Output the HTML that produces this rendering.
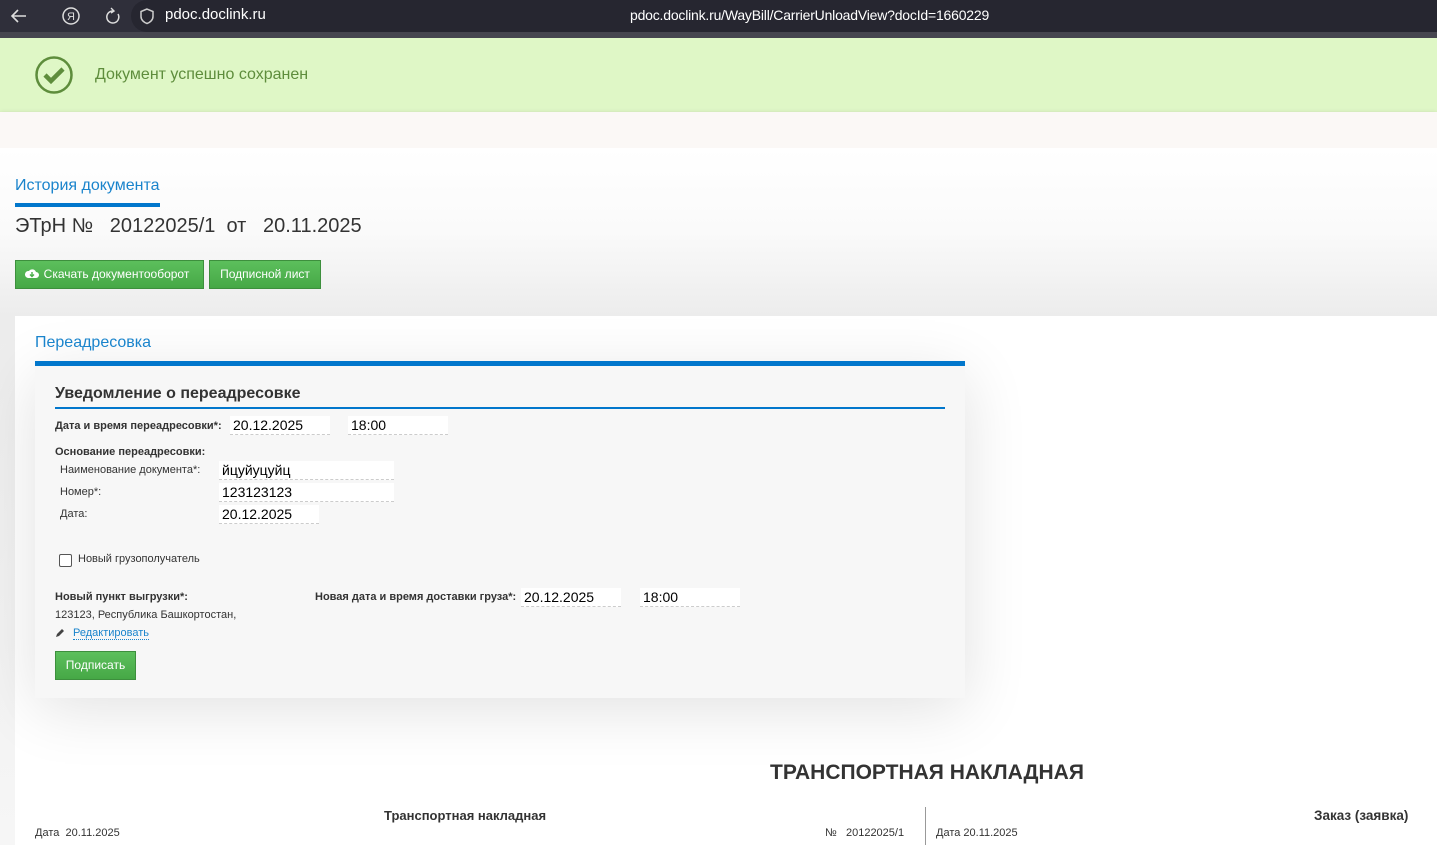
<!DOCTYPE html>
<html><head><meta charset="utf-8"><style>
*{margin:0;padding:0;box-sizing:border-box}
body{width:1437px;height:845px;overflow:hidden;font-family:"Liberation Sans",Arial,sans-serif;background:#fff;position:relative}
.abs{position:absolute}
.bar{left:0;top:0;width:1437px;height:32px;background:#2f2f3a}
.bar2{left:0;top:32px;width:1437px;height:6px;background:#46464f}
.url{left:131px;top:0;width:1306px;height:32px;background:#262630;border-radius:16px 0 0 16px}
.succ{left:0;top:38px;width:1437px;height:74px;background:#dff7c6}
.pink{left:0;top:112px;width:1437px;height:36px;background:#fbf8f6;box-shadow:0 2px 5px rgba(0,0,0,.25)}
.grad{left:0;top:148px;width:1437px;height:168px;background:linear-gradient(#fff 0%,#fafafa 50%,#ececec 100%)}
.strip{left:0;top:316px;width:15px;height:529px;background:linear-gradient(#ececec,#f6f6f6)}
.card{left:15px;top:316px;width:1422px;height:529px;background:#fff}
.inner{left:35px;top:366px;width:930px;height:332px;background:#f7f7f7;box-shadow:0 10px 60px rgba(0,0,0,.12)}
.btn{background:linear-gradient(#5cbf5c,#46a846);border:1px solid #3d8f3d;color:#fff;font-size:12px;text-align:center}
.in{background:#fff;border-bottom:1px dashed #ccc;font-size:14px;color:#000;padding-left:3px;height:19px;line-height:18px}
.lb{font-size:11px;color:#333}
.b{font-weight:bold}
</style></head><body>
<div class="abs bar"></div><div class="abs bar2"></div><div class="abs url"></div>
<svg class="abs" style="left:8px;top:6px" width="130" height="22" viewBox="0 0 130 22">
<path d="M18 10H5M10 4 4 10l6 6" stroke="#ddd" stroke-width="1.6" fill="none"/>
<circle cx="63" cy="10" r="8" stroke="#ddd" stroke-width="1.5" fill="none"/><text x="59" y="14" fill="#ddd" font-size="11" font-family="Liberation Sans">Я</text>
<path d="M105 5a6 6 0 1 0 5 3" stroke="#ddd" stroke-width="1.5" fill="none"/><path d="M103 2l3 3-3 2" stroke="#ddd" stroke-width="1.4" fill="none"/>
</svg>
<svg class="abs" style="left:139px;top:8px" width="16" height="17"><path d="M8 1 2 3.5v5c0 3.5 3 6 6 7 3-1 6-3.5 6-7v-5z" stroke="#ccc" stroke-width="1.5" fill="none"/></svg>
<div class="abs" style="left:165px;top:6px;color:#fff;font-size:15px">pdoc.doclink.ru</div>
<div class="abs" style="left:630px;top:7px;color:#fff;font-size:14px;letter-spacing:-0.2px">pdoc.doclink.ru/WayBill/CarrierUnloadView?docId=1660229</div>
<div class="abs succ"></div>
<svg class="abs" style="left:34px;top:55px" width="40" height="40"><circle cx="20" cy="20" r="17.5" stroke="#5e8d3c" stroke-width="2.5" fill="none"/><path d="M11 20l6 6 12-12" stroke="#5e8d3c" stroke-width="4.5" fill="none"/></svg>
<div class="abs" style="left:95px;top:66px;font-size:16px;color:#5e8d3c">Документ успешно сохранен</div>
<div class="abs pink"></div>
<div class="abs grad"></div>
<div class="abs" style="left:15px;top:177px;font-size:16px;color:#1a84cc">История документа</div>
<div class="abs" style="left:15px;top:203px;width:145px;height:4px;background:#0277cc"></div>
<div class="abs" style="left:15px;top:215px;font-size:20px;color:#333;white-space:pre">ЭТрН №   20122025/1  от   20.11.2025</div>
<div class="abs btn" style="left:15px;top:260px;width:189px;height:29px;line-height:27px;padding-left:14px">Скачать документооборот</div>
<svg class="abs" style="left:25px;top:267px" width="14" height="12"><path d="M3 11h8a3 3 0 0 0 0-6 4 4 0 0 0-7-1 3 3 0 0 0-1 7z" fill="#fff"/><path d="M7 5v4M5 7.5 7 9.5 9 7.5" stroke="#4bb04b" stroke-width="1.4" fill="none"/></svg>
<div class="abs btn" style="left:209px;top:260px;width:112px;height:29px;line-height:27px">Подписной лист</div>
<div class="abs strip"></div>
<div class="abs card"></div>
<div class="abs inner"></div>
<div class="abs" style="left:35px;top:334px;font-size:16px;color:#1a84cc">Переадресовка</div>
<div class="abs" style="left:35px;top:361px;width:930px;height:5px;background:#0277cc"></div>
<div class="abs b" style="left:55px;top:385px;font-size:16px;color:#333">Уведомление о переадресовке</div>
<div class="abs" style="left:55px;top:407px;width:890px;height:2px;background:#0277cc"></div>
<div class="abs lb b" style="left:55px;top:420px">Дата и время переадресовки*:</div>
<div class="abs in" style="left:230px;top:416px;width:100px">20.12.2025</div>
<div class="abs in" style="left:348px;top:416px;width:100px">18:00</div>
<div class="abs lb b" style="left:55px;top:446px">Основание переадресовки:</div>
<div class="abs lb" style="left:60px;top:464px">Наименование документа*:</div>
<div class="abs lb" style="left:60px;top:486px">Номер*:</div>
<div class="abs lb" style="left:60px;top:508px">Дата:</div>
<div class="abs in" style="left:219px;top:461px;width:175px">йцуйуцуйц</div>
<div class="abs in" style="left:219px;top:483px;width:175px">123123123</div>
<div class="abs in" style="left:219px;top:505px;width:100px">20.12.2025</div>
<div class="abs" style="left:59px;top:554px;width:13px;height:13px;border:1px solid #555;border-radius:2px;background:#fff"></div>
<div class="abs lb" style="left:78px;top:553px">Новый грузополучатель</div>
<div class="abs lb b" style="left:55px;top:591px">Новый пункт выгрузки*:</div>
<div class="abs lb" style="left:55px;top:609px">123123, Республика Башкортостан,</div>
<svg class="abs" style="left:55px;top:628px" width="10" height="10"><path d="M1 9l1-3 5-5 2 2-5 5z" fill="#444"/></svg>
<div class="abs lb" style="left:73px;top:627px;color:#1a84cc;border-bottom:1px dotted #1a84cc;line-height:12px">Редактировать</div>
<div class="abs lb b" style="left:315px;top:591px">Новая дата и время доставки груза*:</div>
<div class="abs in" style="left:521px;top:588px;width:100px">20.12.2025</div>
<div class="abs in" style="left:640px;top:588px;width:100px">18:00</div>
<div class="abs btn" style="left:55px;top:651px;width:81px;height:29px;line-height:27px">Подписать</div>
<div class="abs b" style="left:770px;top:761px;font-size:21px;color:#333">ТРАНСПОРТНАЯ НАКЛАДНАЯ</div>
<div class="abs b" style="left:384px;top:808px;font-size:13px;color:#333">Транспортная накладная</div>
<div class="abs b" style="left:1314px;top:808px;font-size:13.5px;color:#333">Заказ (заявка)</div>
<div class="abs" style="left:925px;top:807px;width:1px;height:38px;background:#999"></div>
<div class="abs lb" style="left:35px;top:827px">Дата&nbsp; 20.11.2025</div>
<div class="abs lb" style="left:825px;top:827px">№&nbsp;&nbsp; 20122025/1</div>
<div class="abs lb" style="left:936px;top:827px">Дата 20.11.2025</div>
</body></html>
